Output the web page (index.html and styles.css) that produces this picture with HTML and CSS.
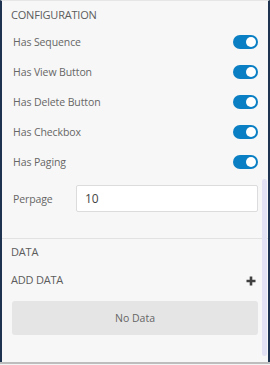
FILE: index.html
```html
<!DOCTYPE html>
<html lang="en">
<head>
    <meta charset="UTF-8">
    <meta name="viewport" content="width=device-width, initial-scale=1.0">
    <title>Grid Settings</title>
    <link rel="stylesheet" href="styles.css">
</head>
<body>
    <div class="panel">
        <div class="section-title">CONFIGURATION</div>

        <div class="row">
            <span class="label">Has Sequence</span>
            <span class="toggle"><span class="knob"></span></span>
        </div>
        <div class="row">
            <span class="label">Has View Button</span>
            <span class="toggle"><span class="knob"></span></span>
        </div>
        <div class="row">
            <span class="label">Has Delete Button</span>
            <span class="toggle"><span class="knob"></span></span>
        </div>
        <div class="row">
            <span class="label">Has Checkbox</span>
            <span class="toggle"><span class="knob"></span></span>
        </div>
        <div class="row">
            <span class="label">Has Paging</span>
            <span class="toggle"><span class="knob"></span></span>
        </div>

        <div class="row input-row">
            <label class="label" for="perpage">Perpage</label>
            <input type="text" id="perpage" value="10">
        </div>

        <div class="data-section">
            <div class="section-title">DATA</div>
            <div class="add-row">
                <span class="section-title">ADD DATA</span>
                <svg class="plus" width="10" height="10" viewBox="0 0 10 10">
                    <path d="M5 0.5v9M0.5 5h9" stroke="#404040" stroke-width="2.6"/>
                </svg>
            </div>
            <div class="empty">No Data</div>
        </div>

        <div class="scroll-thumb"></div>
    </div>
</body>
</html>
```

FILE: styles.css
```css
* {
    margin: 0;
    padding: 0;
    box-sizing: border-box;
}

body {
    font-family: 'Open Sans', 'Liberation Sans', sans-serif;
    background: #ffffff;
    width: 270px;
    height: 365px;
}

.panel {
    position: relative;
    height: 362px;
    background: #f7f7f7;
    border-left: 2px solid #1d3350;
    border-right: 2px solid #1d3350;
    border-top: 1px solid #e6e6e6;
    box-shadow: 0 2px 1px #bdbdbd;
    color: #555;
}

.section-title {
    font-size: 11px;
    line-height: 16px;
    color: #5c5c5c;
    padding: 6px 9px 0;
    letter-spacing: -0.2px;
}

.row {
    display: flex;
    align-items: center;
    justify-content: space-between;
    height: 30px;
    padding: 0 10px 0 11px;
}

.panel > .section-title + .row {
    margin-top: 4px;
}

.label {
    font-size: 10.5px;
    color: #666;
    letter-spacing: -0.1px;
}

.toggle {
    position: relative;
    width: 25px;
    height: 14px;
    border-radius: 7px;
    background: #0a7fc3;
}

.knob {
    position: absolute;
    top: 2px;
    right: 2px;
    width: 10px;
    height: 10px;
    border-radius: 50%;
    background: #fff;
}

.input-row {
    height: 27px;
    margin-top: 8px;
}

.input-row input {
    width: 182px;
    height: 27px;
    border: 1px solid #dcdcdc;
    border-radius: 2px;
    background: #fff;
    padding: 0 8px;
    font-family: inherit;
    font-size: 12px;
    color: #444;
}

.data-section {
    margin-top: 26px;
    border-top: 1px solid #e2e2e2;
}

.data-section .section-title {
    padding-top: 5px;
}

.add-row {
    display: flex;
    align-items: center;
    justify-content: space-between;
    padding: 6px 12px 0 0;
}

.add-row .section-title {
    padding-top: 6px;
}

.plus {
    margin-top: 8px;
}

.empty {
    margin: 13px 10px 0 10px;
    height: 34px;
    border-radius: 3px;
    background: #e5e5e5;
    display: flex;
    align-items: center;
    justify-content: center;
    font-size: 10.5px;
    color: #666;
}

.scroll-thumb {
    position: absolute;
    right: 1px;
    top: 178px;
    width: 5px;
    height: 177px;
    border-radius: 3px;
    background: #e2e2f4;
}
```
